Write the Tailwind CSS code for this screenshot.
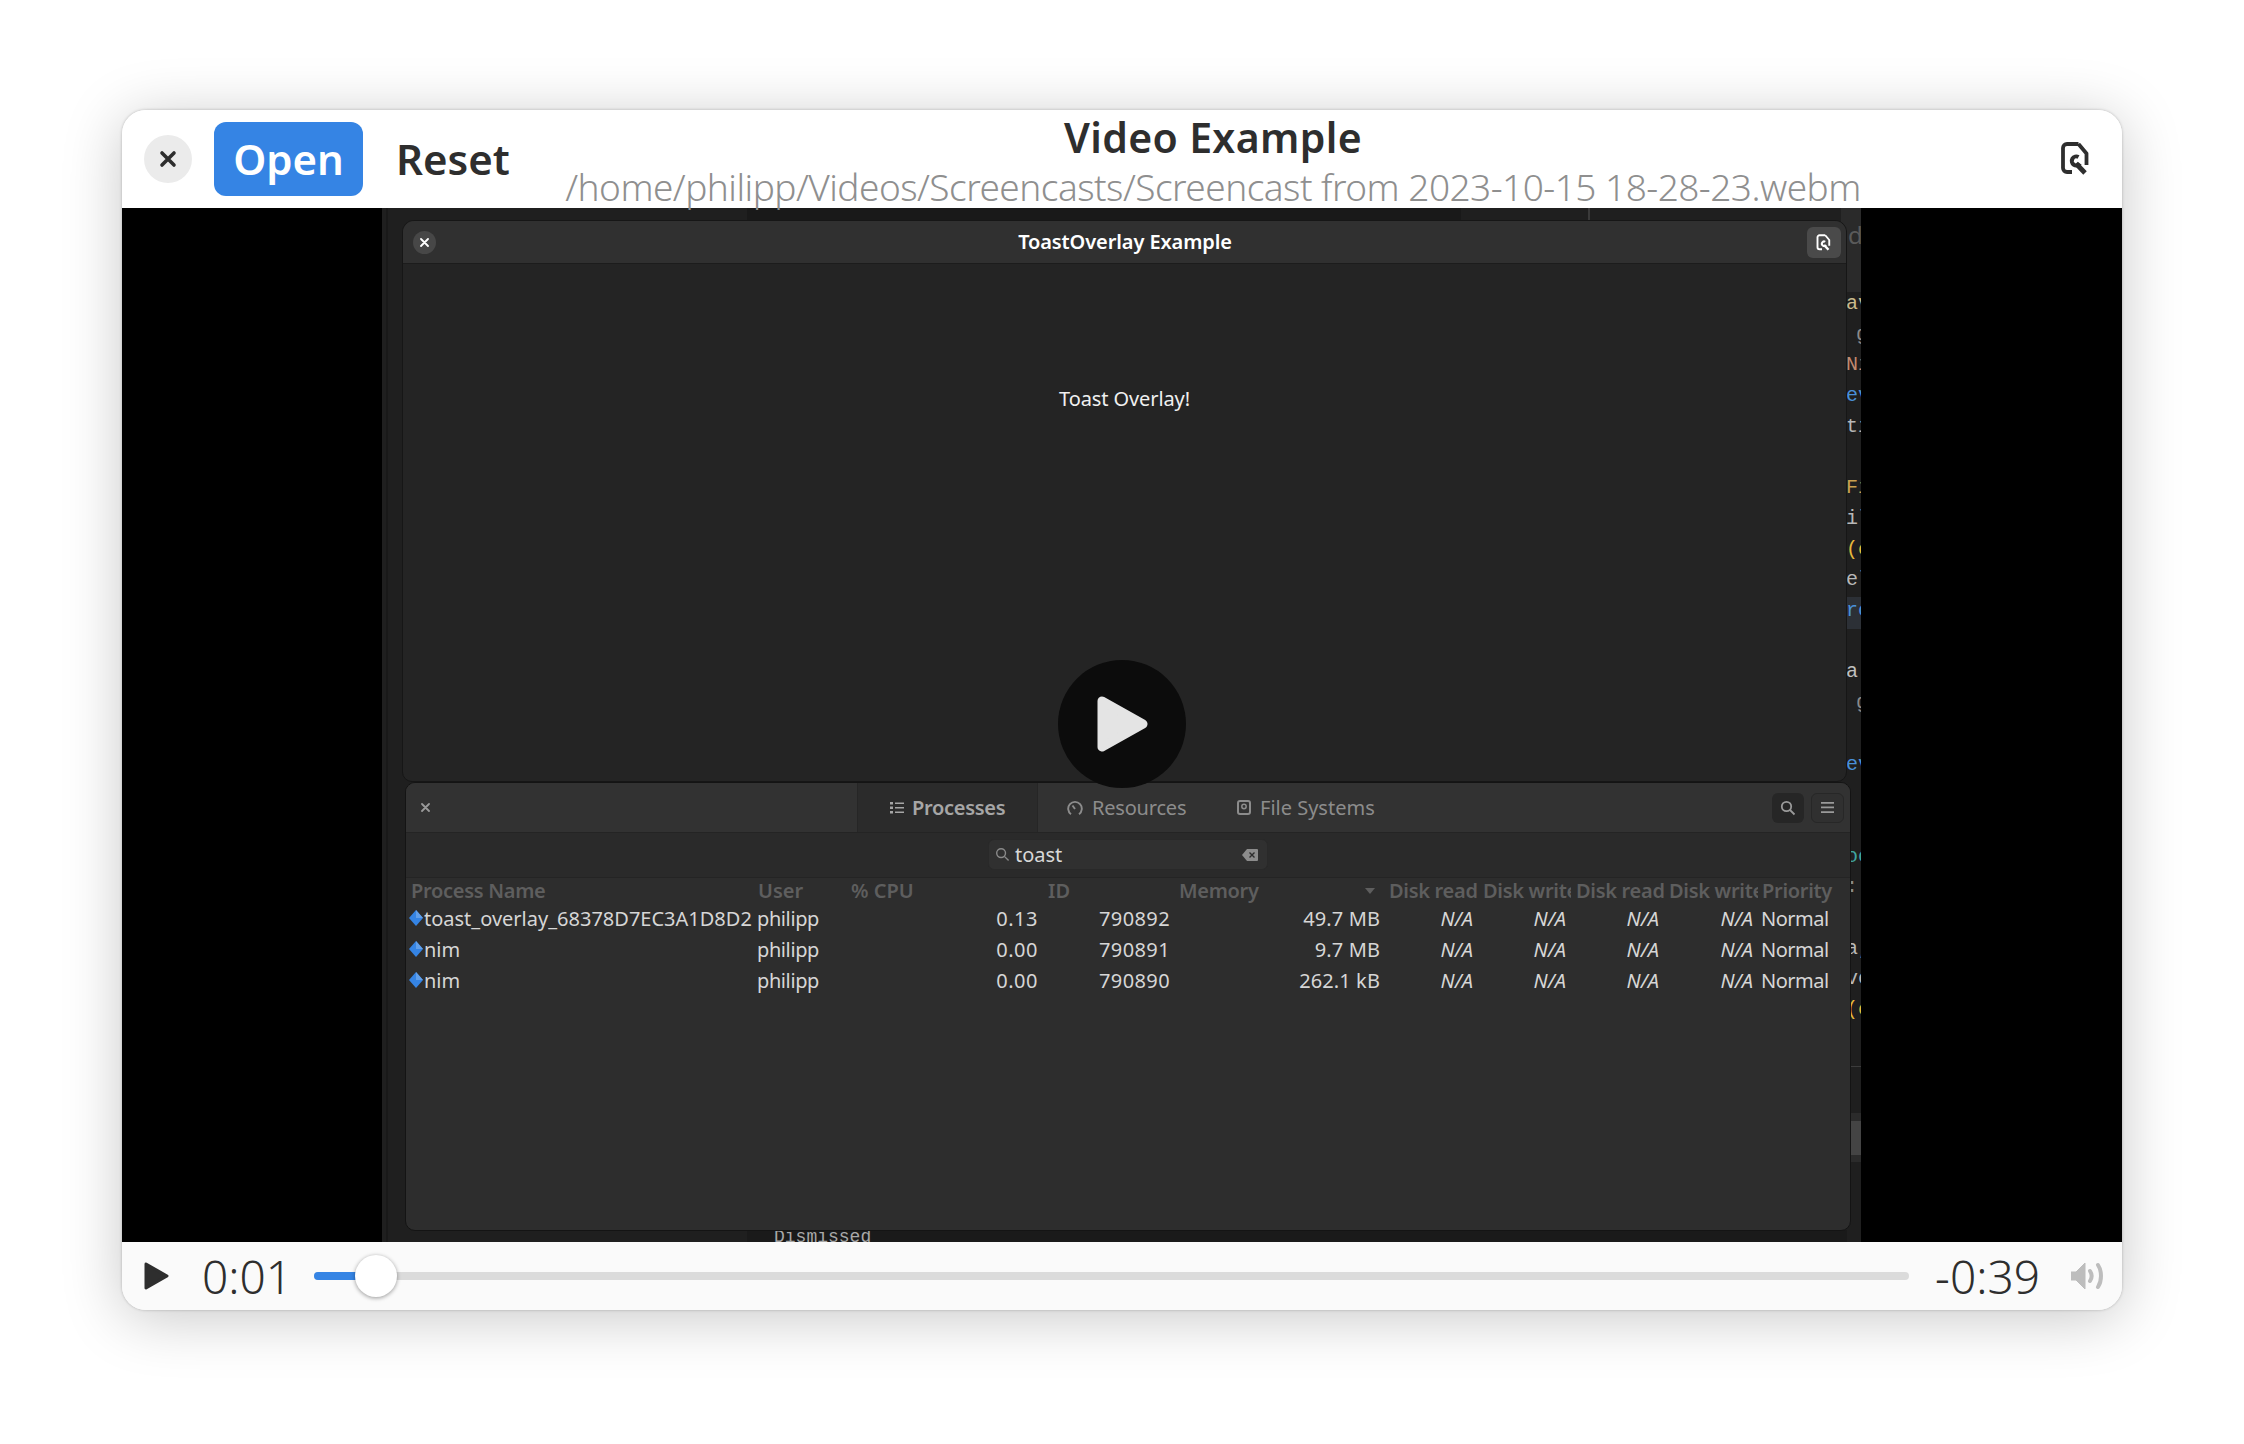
<!DOCTYPE html>
<html lang="en">
<head>
  <meta charset="UTF-8">
  <title>Video Example</title>
  <script src="https://cdn.jsdelivr.net/npm/@tailwindcss/browser@4"></script>
</head>
<body class="w-[2244px] h-[1444px] bg-white overflow-hidden font-['Noto_Sans',sans-serif]">
  <div class="pt-[110px] pl-[122px]">
    <!-- Window -->
    <div class="w-[2000px] h-[1200px] rounded-[24px] overflow-hidden flex flex-col bg-white shadow-[0_8px_60px_rgba(0,0,0,0.22),0_0_3px_rgba(0,0,0,0.25)]">

      <!-- Header bar -->
      <header class="h-[98px] shrink-0 flex items-start bg-white relative z-10">
        <div class="w-[441px] shrink-0 flex items-center pt-[12px] pl-[22px]">
          <button class="w-[48px] h-[48px] rounded-full bg-[#ebebeb] flex items-center justify-center">
            <svg width="18" height="18" viewBox="0 0 18 18"><path d="M3 3l12 12M15 3L3 15" stroke="#2e2e2e" stroke-width="3.6" stroke-linecap="round"/></svg>
          </button>
          <button class="ml-[22px] w-[149px] h-[74px] rounded-[12px] bg-[#3584e4] text-white text-[42px] font-semibold leading-none">Open</button>
          <span class="ml-[33px] text-[42px] font-semibold text-[#2e2e2e] leading-none">Reset</span>
        </div>
        <div class="w-[1300px] shrink-0 text-center">
          <div class="text-[41px] font-semibold text-[#2e2e2e] leading-[54px] tracking-[0.35px]">Video Example</div>
          <div class="text-[37px] font-light text-[#8f8f8f] leading-[46px] whitespace-nowrap tracking-[-0.52px]">/home/philipp/Videos/Screencasts/Screencast from 2023-10-15 18-28-23.webm</div>
        </div>
        <div class="pl-[197px] pt-[32px]">
          <svg width="30" height="33" viewBox="0 0 30 33" fill="none" stroke="#2e2e2e">
            <path d="M18.500 2H7a4 4 0 0 0-4 4v20a4 4 0 0 0 4 4h5M18.500 2l8 9.500v11.500" stroke-width="3.800" stroke-linejoin="round"/>
            <path d="M18.500 15a4.500 4.500 0 1 0 1.500 6.500" stroke-width="4"/>
            <path d="M16 21.500l9 9.500" stroke-width="4.800"/>
          </svg>
        </div>
      </header>

      <!-- Video frame -->
      <div class="h-[1034px] shrink-0 bg-black relative overflow-hidden">
        <div class="absolute left-[260px] top-0 w-[1479px] h-full bg-[#1f1f1f] overflow-hidden">
          <div class="absolute left-[4px] top-0 w-[2px] h-full bg-[#191919]"></div>
          <!-- editor and terminal behind the windows -->
          <div class="absolute left-[365px] top-0 w-[714px] h-[12px] bg-[#191919]"></div>
          <div class="absolute left-[1206px] top-0 w-[2px] h-[12px] bg-[#3a3a3a]"></div>
          <div class="absolute left-[365px] bottom-0 w-[1100px] h-[12px] bg-[#1a1a1a]"></div>
          <div class="absolute left-[392px] bottom-[-4px] text-[18px] leading-[18px] font-['Liberation_Mono',monospace] text-[#a8a8a8]">Dismissed</div>
          <div class="absolute right-0 top-0 w-[20px] h-[84px] bg-[#2a2a2a]"></div>
          <div class="absolute left-[1466px] top-[12px] text-[24px] leading-[30px] text-[#5a5a5a]">do</div>
          <div class="absolute left-[1464px] top-[389px] w-[15px] h-[32px] bg-[#2c3036]"></div>
          <div class="absolute right-0 top-[858px] w-[20px] h-[1px] bg-[#3c3c3c]"></div>
          <div class="absolute right-0 top-[905px] w-[20px] h-[49px] bg-[#2b2b2b] py-[8px]"><div class="h-[34px] bg-[#444444]"></div></div>
          <!-- editor lines at the right edge -->
          <div class="absolute left-[1464px] top-[81px] font-['Liberation_Mono',monospace] text-[20px] leading-[30.7px] whitespace-nowrap">
            <div class="text-[#c9b98c]">av</div>
            <div class="pl-[10px] text-[#8a8a8a]">g</div>
            <div class="text-[#c08a70]">Ni</div>
            <div class="text-[#4a90d9]">ev</div>
            <div class="text-[#b8b8b8]">ti</div>
            <div>&nbsp;</div>
            <div class="text-[#c9a050]">Fi</div>
            <div class="text-[#b8b8b8]">il</div>
            <div class="text-[#e5b93c]">(c</div>
            <div class="text-[#b8b8b8]">el</div>
            <div class="text-[#4a90d9]">rc</div>
            <div>&nbsp;</div>
            <div class="text-[#c0c0c0]">a</div>
            <div class="pl-[10px] text-[#8a8a8a]">g</div>
            <div>&nbsp;</div>
            <div class="text-[#4a90d9]">ev</div>
            <div>&nbsp;</div>
            <div>&nbsp;</div>
            <div class="text-[#3fa5a0]">oc</div>
            <div class="text-[#8a8a8a]">:</div>
            <div>&nbsp;</div>
            <div class="text-[#b8b8b8]">a,</div>
            <div class="text-[#b8b8b8]">ve</div>
            <div class="text-[#e5b93c]">(e</div>
          </div>

          <!-- ToastOverlay window -->
          <div class="absolute left-[20px] top-[12px] w-[1445px] h-[562px] rounded-t-[12px] rounded-b-[10px] bg-[#242424] border border-[#161616] overflow-hidden flex flex-col">
            <div class="h-[43px] shrink-0 bg-[#303030] border-b border-[#1c1c1c] flex items-center justify-between pl-[10px] pr-[5px]">
              <div class="w-[23px] h-[23px] rounded-full bg-[#474747] flex items-center justify-center">
                <svg width="9" height="9" viewBox="0 0 9 9"><path d="M1 1l7 7M8 1L1 8" stroke="#ffffff" stroke-width="1.8" stroke-linecap="round"/></svg>
              </div>
              <span class="text-[20px] font-semibold text-white leading-none pl-[7px] tracking-[-0.1px]">ToastOverlay Example</span>
              <div class="w-[34px] h-[31px] rounded-[6px] bg-[#4a4a4a] flex items-center justify-center">
                <svg width="15" height="17" viewBox="0 0 30 33" fill="none" stroke="#ffffff">
                  <path d="M18.500 2H7a4 4 0 0 0-4 4v20a4 4 0 0 0 4 4h5M18.500 2l8 9.500v11.500" stroke-width="3.800" stroke-linejoin="round"/>
                  <path d="M18.500 15a4.500 4.500 0 1 0 1.500 6.500" stroke-width="4"/>
                  <path d="M16 21.500l9 9.500" stroke-width="4.800"/>
                </svg>
              </div>
            </div>
            <div class="flex-1 flex justify-center pt-[121px] text-[20px] leading-[28px] text-[#f0f0f0] tracking-[-0.1px]">Toast Overlay!</div>
          </div>

          <!-- System Monitor window -->
          <div class="absolute left-[23px] top-[574px] w-[1446px] h-[449px] rounded-[10px] bg-[#2d2d2d] border border-[#141414] overflow-hidden flex flex-col">
            <div class="h-[50px] shrink-0 bg-[#323232] border-b border-[#242424] flex items-stretch text-[20px] font-semibold text-[#8c8c8c]">
              <div class="w-[451px] shrink-0 pl-[15px] flex items-center">
                <svg width="9" height="9" viewBox="0 0 9 9"><path d="M1 1l7 7M8 1L1 8" stroke="#9a9a9a" stroke-width="1.8" stroke-linecap="round"/></svg>
              </div>
              <div class="w-[181px] shrink-0 bg-[#2b2b2b] border-x border-[#262626] flex items-center gap-[8px] pl-[32px] text-[#a6a6a6] tracking-[-0.3px]">
                <svg width="14" height="14" viewBox="0 0 14 14" fill="#a6a6a6"><path d="M0 1h3v2.500H0zM5 1.500h9v1.500H5zM0 5.500h3V8H0zM5 6h9v1.500H5zM0 10h3v2.500H0zM5 10.500h9V12H5z"/></svg>
                <span>Processes</span>
              </div>
              <div class="w-[175px] shrink-0 flex items-center gap-[9px] pl-[29px] font-normal tracking-[-0.2px]">
                <svg width="16" height="16" viewBox="0 0 16 16" fill="none" stroke="#8c8c8c" stroke-width="1.900"><path d="M4 14.200A6.800 6.800 0 1 1 12 14.200"/><path d="M5.500 5.500l2.500 3.500"/></svg>
                <span>Resources</span>
              </div>
              <div class="flex items-center gap-[9px] pl-[24px] font-normal">
                <svg width="14" height="15" viewBox="0 0 14 15" fill="none"><rect x="1" y="1" width="12" height="13" rx="2" stroke="#8c8c8c" stroke-width="2"/><circle cx="7" cy="6.500" r="2.200" stroke="#8c8c8c" stroke-width="1.500"/></svg>
                <span>File Systems</span>
              </div>
              <div class="ml-auto flex items-center gap-[7px] pr-[6px]">
                <div class="w-[32px] h-[30px] rounded-[6px] bg-[#262626] flex items-center justify-center">
                  <svg width="16" height="16" viewBox="0 0 16 16" fill="none" stroke="#9a9a9a" stroke-width="1.800"><circle cx="6.500" cy="6.500" r="4.700"/><path d="M10 10l4.500 4.500"/></svg>
                </div>
                <div class="w-[33px] h-[30px] rounded-[6px] bg-[#303030] border border-[#272727] flex items-center justify-center">
                  <svg width="13" height="13" viewBox="0 0 13 13" fill="#9a9a9a"><path d="M0 1h13v1.700H0zM0 5.600h13v1.700H0zM0 10.200h13v1.700H0z"/></svg>
                </div>
              </div>
            </div>
            <div class="h-[45px] shrink-0 bg-[#2a2a2a] border-b border-[#242424] flex justify-center pt-[6px]">
              <div class="w-[280px] h-[31px] rounded-[6px] bg-[#303030] border border-[#292929] flex items-center px-[6px] text-[20px] text-[#d8d8d8]">
                <svg width="15" height="15" viewBox="0 0 16 16" fill="none" stroke="#8a8a8a" stroke-width="1.500"><circle cx="6.500" cy="6.500" r="4.700"/><path d="M10 10l4.500 4.500"/></svg>
                <span class="ml-[5px] leading-none">toast</span>
                <svg class="ml-auto mr-[3px]" width="16" height="12" viewBox="0 0 16 12"><path d="M5 0h10a1 1 0 0 1 1 1v10a1 1 0 0 1-1 1H5L0 6z" fill="#8c8c8c"/><path d="M7.500 3.500l5 5M12.500 3.500l-5 5" stroke="#2d2d2d" stroke-width="1.400"/></svg>
              </div>
            </div>

            <!-- Process table -->
            <div class="text-[20px] pl-[6px]">
              <div class="grid grid-cols-[346px_93px_190px_136px_207px_94px_93px_93px_94px_80px] h-[25px] leading-[25px] items-center text-[#5e5e5e] font-semibold whitespace-nowrap overflow-hidden">
                <span class="-ml-[1px] tracking-[-0.3px]">Process Name</span>
                <span>User</span>
                <span>% CPU</span>
                <span class="pl-[7px]">ID</span>
                <div class="pl-[2px] flex items-center justify-between pr-[9px] tracking-[-0.3px]"><span>Memory</span><svg width="10" height="6" viewBox="0 0 10 6" fill="#5e5e5e"><path d="M0 0h10L5 6z"/></svg></div>
                <span class="overflow-hidden pl-[5px] tracking-[-0.3px]">Disk read</span>
                <span class="overflow-hidden pl-[5px] tracking-[-0.3px]">Disk write</span>
                <span class="overflow-hidden pl-[5px] tracking-[-0.3px]">Disk read</span>
                <span class="overflow-hidden pl-[5px] tracking-[-0.3px]">Disk write</span>
                <span class="pl-[4px] tracking-[-0.3px]">Priority</span>
              </div>
              <div class="grid grid-cols-[346px_93px_190px_136px_207px_94px_93px_93px_94px_80px] h-[31px] items-center text-[#d6d6d6] whitespace-nowrap">
                <div class="flex items-center -ml-[4px]"><svg class="shrink-0 -mt-[2px]" width="16" height="16" viewBox="0 0 16 16"><path d="M8 0l7 8-7 8-7-8z" fill="#3584e4"/><path d="M8 0l7 8H8z" fill="#62a0ea"/></svg><span>toast_overlay_68378D7EC3A1D8D2</span></div>
                <span class="-ml-[1px] tracking-[-0.4px]">philipp</span>
                <span class="text-right pr-[3px] tracking-[0.5px]">0.13</span>
                <span class="text-right pr-[7px] tracking-[0.4px]">790892</span>
                <span class="text-right pr-[4px] tracking-[0.1px]">49.7 MB</span>
                <span class="text-right pr-[5px] italic">N/A</span>
                <span class="text-right pr-[5px] italic">N/A</span>
                <span class="text-right pr-[5px] italic">N/A</span>
                <span class="text-right pr-[5px] italic">N/A</span>
                <span class="pl-[3px] tracking-[-0.5px]">Normal</span>
              </div>
              <div class="grid grid-cols-[346px_93px_190px_136px_207px_94px_93px_93px_94px_80px] h-[31px] items-center text-[#d6d6d6] whitespace-nowrap">
                <div class="flex items-center -ml-[4px]"><svg class="shrink-0 -mt-[2px]" width="16" height="16" viewBox="0 0 16 16"><path d="M8 0l7 8-7 8-7-8z" fill="#3584e4"/><path d="M8 0l7 8H8z" fill="#62a0ea"/></svg><span>nim</span></div>
                <span class="-ml-[1px] tracking-[-0.4px]">philipp</span>
                <span class="text-right pr-[3px] tracking-[0.5px]">0.00</span>
                <span class="text-right pr-[7px] tracking-[0.4px]">790891</span>
                <span class="text-right pr-[4px] tracking-[0.1px]">9.7 MB</span>
                <span class="text-right pr-[5px] italic">N/A</span>
                <span class="text-right pr-[5px] italic">N/A</span>
                <span class="text-right pr-[5px] italic">N/A</span>
                <span class="text-right pr-[5px] italic">N/A</span>
                <span class="pl-[3px] tracking-[-0.5px]">Normal</span>
              </div>
              <div class="grid grid-cols-[346px_93px_190px_136px_207px_94px_93px_93px_94px_80px] h-[31px] items-center text-[#d6d6d6] whitespace-nowrap">
                <div class="flex items-center -ml-[4px]"><svg class="shrink-0 -mt-[2px]" width="16" height="16" viewBox="0 0 16 16"><path d="M8 0l7 8-7 8-7-8z" fill="#3584e4"/><path d="M8 0l7 8H8z" fill="#62a0ea"/></svg><span>nim</span></div>
                <span class="-ml-[1px] tracking-[-0.4px]">philipp</span>
                <span class="text-right pr-[3px] tracking-[0.5px]">0.00</span>
                <span class="text-right pr-[7px] tracking-[0.4px]">790890</span>
                <span class="text-right pr-[4px] tracking-[0.1px]">262.1 kB</span>
                <span class="text-right pr-[5px] italic">N/A</span>
                <span class="text-right pr-[5px] italic">N/A</span>
                <span class="text-right pr-[5px] italic">N/A</span>
                <span class="text-right pr-[5px] italic">N/A</span>
                <span class="pl-[3px] tracking-[-0.5px]">Normal</span>
              </div>
            </div>
          </div>
        </div>

        <!-- Big play button -->
        <div class="absolute left-[936px] top-[452px] w-[128px] h-[128px] rounded-full bg-[#0c0c0c] flex items-center justify-center">
          <svg class="ml-[2px]" width="52" height="58" viewBox="0 0 52 58"><path d="M5 6L46 29 5 52z" fill="#e4e4e4" stroke="#e4e4e4" stroke-width="9" stroke-linejoin="round"/></svg>
        </div>
      </div>

      <!-- Player controls -->
      <div class="h-[68px] shrink-0 bg-[#fafafa] flex items-center pl-[22px] pr-[18px]">
        <svg width="25" height="28" viewBox="0 0 25 28"><path d="M2 2l21 12L2 26z" fill="#2e2e2e" stroke="#2e2e2e" stroke-width="3" stroke-linejoin="round"/></svg>
        <span class="ml-[33px] w-[87px] text-[46px] leading-none font-light text-[#2e2e2e]">0:01</span>
        <div class="ml-[25px] w-[1596px] h-[8px] rounded-full bg-[#dbdbdb] relative">
          <div class="absolute left-0 top-0 h-full w-[50px] rounded-l-full bg-[#3584e4]"></div>
          <div class="absolute left-[41px] -top-[17px] w-[42px] h-[42px] rounded-full bg-white shadow-[0_1px_4px_rgba(0,0,0,0.4)]"></div>
        </div>
        <span class="ml-[26px] w-[105px] text-[46px] leading-none font-light text-[#2e2e2e] whitespace-nowrap">-0:39</span>
        <svg class="ml-[31px]" width="33" height="28" viewBox="0 0 33 28" fill="none">
          <path d="M0 10h5L14 1v26L5 18H0z" fill="#bdbdbd" stroke="#bdbdbd" stroke-linejoin="round"/>
          <path d="M19 9c2 3 2 7 0 10" stroke="#bdbdbd" stroke-width="4" stroke-linecap="round"/>
          <path d="M27 3c4 6 4 16 0 22" stroke="#bdbdbd" stroke-width="4" stroke-linecap="round"/>
        </svg>
      </div>
    </div>
  </div>
</body>
</html>
